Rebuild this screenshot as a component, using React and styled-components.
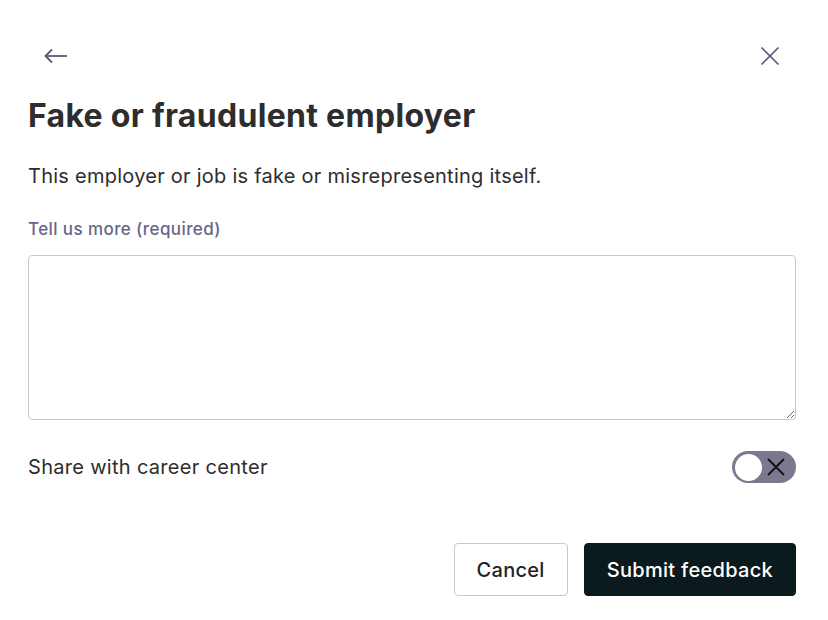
import React from "react";
import styled, { createGlobalStyle } from "styled-components";

const GlobalStyle = createGlobalStyle`
  html, body {
    margin: 0;
    padding: 0;
    background: #ffffff;
    font-family: Inter, "Noto Sans", sans-serif;
    color: #2d2d2d;
  }
`;

const Modal = styled.div`
  width: 828px;
  height: 620px;
  box-sizing: border-box;
  padding: 36px 32px 0 28px;
  display: flex;
  flex-direction: column;
`;

const TopBar = styled.div`
  display: flex;
  justify-content: space-between;
  align-items: center;
  height: 40px;
  margin-left: 8px;
`;

const IconButton = styled.button`
  width: 40px;
  height: 40px;
  padding: 0;
  border: none;
  background: none;
  display: flex;
  align-items: center;
  justify-content: center;
  color: #5c5b7c;
  cursor: pointer;
`;

const Title = styled.h1`
  margin: 20px 0 0;
  font-size: 32px;
  font-weight: 700;
  line-height: 40px;
  letter-spacing: 0.3px;
  color: #2d2d2d;
`;

const Description = styled.p`
  margin: 26px 0 0;
  font-size: 20px;
  line-height: 28px;
  letter-spacing: 0.25px;
  color: #2d2d2d;
`;

const FieldLabel = styled.label`
  margin-top: 27px;
  font-size: 17px;
  font-weight: 500;
  line-height: 24px;
  letter-spacing: 0.4px;
  color: #67668a;
`;

const TextArea = styled.textarea`
  margin-top: 14px;
  height: 165px;
  box-sizing: border-box;
  border: 1px solid #c9c8d0;
  border-radius: 4px;
  padding: 12px;
  font-family: inherit;
  font-size: 18px;
  resize: vertical;
  outline: none;
`;

const ShareRow = styled.div`
  margin-top: 31px;
  display: flex;
  align-items: center;
  justify-content: space-between;
  height: 32px;
`;

const ShareLabel = styled.span`
  font-size: 20px;
  letter-spacing: 0.3px;
  color: #2d2d2d;
`;

const Toggle = styled.button`
  width: 64px;
  height: 32px;
  padding: 0 3px;
  border: none;
  border-radius: 16px;
  background: #7a7990;
  display: flex;
  align-items: center;
  justify-content: space-between;
  cursor: pointer;
`;

const Knob = styled.span`
  width: 27px;
  height: 27px;
  border-radius: 50%;
  background: #ffffff;
`;

const Actions = styled.div`
  margin-top: 60px;
  display: flex;
  justify-content: flex-end;
  gap: 16px;
`;

const Button = styled.button`
  height: 53px;
  padding: 0 22px;
  border-radius: 4px;
  font-family: inherit;
  font-size: 20px;
  font-weight: 500;
  letter-spacing: 0.3px;
  cursor: pointer;
  border: 1px solid ${(p) => (p.$primary ? "#0b1a1c" : "#c9c8d0")};
  background: ${(p) => (p.$primary ? "#0b1a1c" : "#ffffff")};
  color: ${(p) => (p.$primary ? "#ffffff" : "#1f1f2a")};
`;

export default function App() {
  return (
    <>
      <GlobalStyle />
      <Modal>
        <TopBar>
          <IconButton aria-label="Back">
            <svg width="26" height="20" viewBox="0 0 26 20" fill="none" stroke="currentColor" strokeWidth="1.8">
              <path d="M24 10H2.5" />
              <path d="M9 3.5L2.5 10L9 16.5" />
            </svg>
          </IconButton>
          <IconButton aria-label="Close" style={{ marginRight: 6 }}>
            <svg width="20" height="20" viewBox="0 0 20 20" fill="none" stroke="currentColor" strokeWidth="1.7">
              <path d="M1.5 1.5L18.5 18.5M18.5 1.5L1.5 18.5" />
            </svg>
          </IconButton>
        </TopBar>
        <Title>Fake or fraudulent employer</Title>
        <Description>This employer or job is fake or misrepresenting itself.</Description>
        <FieldLabel>Tell us more (required)</FieldLabel>
        <TextArea />
        <ShareRow>
          <ShareLabel>Share with career center</ShareLabel>
          <Toggle aria-label="Share with career center">
            <Knob />
            <svg width="20" height="20" viewBox="0 0 20 20" fill="none" stroke="#111" strokeWidth="1.8" style={{ marginRight: 7 }}>
              <path d="M2 2L18 18M18 2L2 18" />
            </svg>
          </Toggle>
        </ShareRow>
        <Actions>
          <Button>Cancel</Button>
          <Button $primary>Submit feedback</Button>
        </Actions>
      </Modal>
    </>
  );
}
